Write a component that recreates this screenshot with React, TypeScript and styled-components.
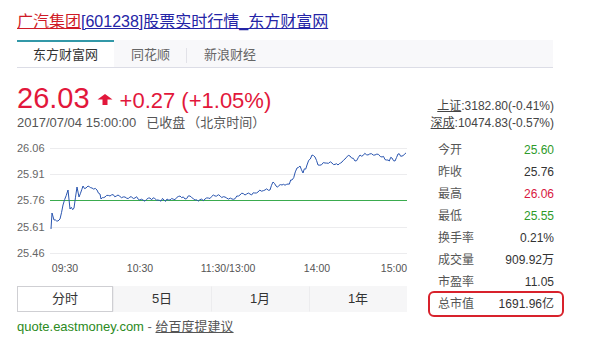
import React from "react";
import styled, { createGlobalStyle } from "styled-components";

const Global = createGlobalStyle`
  html, body { margin: 0; padding: 0; background: #ffffff; }
  body { font-family: "Liberation Sans", "Noto Sans CJK SC", Arial, sans-serif; }
`;

const Page = styled.div`
  width: 593px;
  height: 355px;
  padding: 12px 0 0 17px;
  box-sizing: border-box;
  overflow: hidden;
`;

const Title = styled.div`
  font-size: 16px;
  line-height: 20px;
  white-space: nowrap;
`;

const TitleLink = styled.a<{ $red?: boolean }>`
  color: ${(p) => (p.$red ? "#cf1a26" : "#2424a6")};
  text-decoration: underline;
`;

const TabBar = styled.div`
  margin-top: 8px;
  width: 536px;
  height: 28px;
  box-sizing: border-box;
  background: #f8f8fa;
  border-bottom: 1px solid #dcdde6;
  display: flex;
  align-items: stretch;
`;

const Tab = styled.div<{ $active?: boolean; $sep?: boolean }>`
  position: relative;
  box-sizing: border-box;
  padding: 0 ${(p) => (p.$active ? 16 : 17)}px;
  font-size: 13px;
  line-height: 25px;
  color: ${(p) => (p.$active ? "#333" : "#666")};
  background: ${(p) => (p.$active ? "#ffffff" : "transparent")};
  border-top: 2px solid ${(p) => (p.$active ? "#3298a8" : "transparent")};
  ${(p) =>
    p.$sep
      ? `&::after { content: ""; position: absolute; right: 0; top: 6px; height: 15px; width: 1px; background: #e2e2e8; }`
      : ""}
`;

const Main = styled.div`
  display: grid;
  grid-template-columns: 391px 132px;
  column-gap: 22px;
`;

const LeftCol = styled.div`
  padding-top: 13px;
`;

const PriceRow = styled.div`
  display: flex;
  align-items: baseline;
  color: #e2173b;
  line-height: 34px;
  height: 34px;
`;

const Price = styled.span`
  font-size: 29px;
`;

const Arrow = styled.svg`
  width: 16px;
  height: 11px;
  margin: 0 7px 0 7px;
  align-self: center;
  position: relative;
  top: 1px;
`;

const Change = styled.span`
  font-size: 22px;
`;

const DateLine = styled.div`
  font-size: 13px;
  line-height: 16px;
  color: #555;
  white-space: nowrap;
`;

const Gap = styled.span<{ $w: number }>`
  display: inline-block;
  width: ${(p) => p.$w}px;
`;

const ChartSvg = styled.svg`
  display: block;
  width: 391px;
  height: 148px;
`;

const Periods = styled.div`
  margin-top: 7px;
  display: grid;
  grid-template-columns: 96px 98px 98px 98px;
  height: 26px;
`;

const Period = styled.div<{ $active?: boolean }>`
  box-sizing: border-box;
  font-size: 13px;
  line-height: 24px;
  text-align: center;
  color: #333;
  background: ${(p) => (p.$active ? "#ffffff" : "#f6f6f7")};
  border: 1px solid ${(p) => (p.$active ? "#cfcfd3" : "#f6f6f7")};
  border-left-color: ${(p) => (p.$active ? "#cfcfd3" : "#ececee")};
`;

const Footer = styled.div`
  margin-top: 6px;
  font-size: 13px;
  line-height: 18px;
  color: #666;
  white-space: nowrap;
`;

const Green = styled.span`
  color: #2b8a22;
`;

const Under = styled.span`
  text-decoration: underline;
  color: #555;
`;

const RightCol = styled.div`
  padding-top: 30px;
`;

const IndexLine = styled.div`
  font-size: 12px;
  line-height: 17px;
  text-align: right;
  color: #444;
  padding-right: 8px;
  white-space: nowrap;
`;

const IndexName = styled.span`
  text-decoration: underline;
`;

const Stats = styled.div`
  margin-top: 7px;
`;

const StatRow = styled.div<{ $boxed?: boolean }>`
  display: flex;
  justify-content: space-between;
  height: 22px;
  line-height: 22px;
  font-size: 12px;
  padding: 0 8px;
  border-radius: 4px;
  ${(p) => (p.$boxed ? "outline: 2px solid #d8222c; outline-offset: 0px;" : "")}
`;

const StatLabel = styled.span`
  color: #555;
`;

const StatValue = styled.span<{ $c?: string }>`
  color: ${(p) => p.$c || "#333"};
`;

// chart geometry in page coordinates, converted to svg coordinates
const OX = 17;
const OY = 131;

const KEY: [number, number][] = [
  [51, 229], [52, 213], [54, 220], [58, 221], [60, 219], [63, 205], [68, 190],
  [70, 209], [74, 208], [77, 187], [79, 197], [83, 186], [86, 188], [88, 186],
  [92, 188], [97, 190], [100, 194], [101, 199], [105, 197], [110, 196], [118, 195],
  [125, 197], [135, 198], [143, 200], [150, 198], [158, 200], [170, 200], [180, 196],
  [185, 199], [190, 196], [195, 200], [205, 199], [215, 196], [225, 197], [232, 199],
  [240, 195], [250, 194], [258, 192], [265, 190], [270, 190], [273, 182], [276, 186],
  [282, 185], [288, 184], [292, 180], [297, 168], [300, 166], [303, 173], [307, 165],
  [312, 155], [315, 157], [318, 165], [325, 163], [332, 163], [338, 165], [342, 162],
  [345, 159], [350, 156], [355, 161], [360, 155], [368, 155], [375, 155], [382, 157],
  [388, 160], [392, 158], [395, 161], [398, 154], [402, 156], [406, 153],
];

function buildLine(): string {
  const pts: string[] = [];
  for (let i = 0; i < KEY.length - 1; i++) {
    const [x0, y0] = KEY[i];
    const [x1, y1] = KEY[i + 1];
    const steps = Math.max(1, Math.round((x1 - x0) / 1.6));
    for (let s = 0; s < steps; s++) {
      const t = s / steps;
      const x = x0 + (x1 - x0) * t;
      let y = y0 + (y1 - y0) * t;
      if (s > 0) y += Math.sin(x * 2.7) * 1.1 + Math.sin(x * 7.3) * 0.7;
      pts.push(`${(x - OX).toFixed(1)},${(y - OY).toFixed(1)}`);
    }
  }
  const [lx, ly] = KEY[KEY.length - 1];
  pts.push(`${lx - OX},${ly - OY}`);
  return pts.join(" ");
}

const yLabels = [
  { v: "26.06", y: 148 },
  { v: "25.91", y: 174 },
  { v: "25.76", y: 200 },
  { v: "25.61", y: 227 },
  { v: "25.46", y: 253 },
];

const xLabels = [
  { v: "09:30", x: 65 },
  { v: "10:30", x: 140 },
  { v: "11:30/13:00", x: 228 },
  { v: "14:00", x: 317 },
  { v: "15:00", x: 394 },
];

const stats: { label: string; value: string; color?: string; boxed?: boolean }[] = [
  { label: "今开", value: "25.60", color: "#2e9a2a" },
  { label: "昨收", value: "25.76" },
  { label: "最高", value: "26.06", color: "#d8173f" },
  { label: "最低", value: "25.55", color: "#2e9a2a" },
  { label: "换手率", value: "0.21%" },
  { label: "成交量", value: "909.92万" },
  { label: "市盈率", value: "11.05" },
  { label: "总市值", value: "1691.96亿", boxed: true },
];

function Chart() {
  const line = buildLine();
  return (
    <ChartSvg viewBox="0 0 391 148">
      {yLabels.map((l) => (
        <line
          key={"g" + l.v}
          x1={50 - OX}
          x2={407 - OX}
          y1={l.y - OY + 0.5}
          y2={l.y - OY + 0.5}
          stroke="#ececee"
          strokeWidth={1}
        />
      ))}
      {yLabels.map((l) => (
        <text
          key={"t" + l.v}
          x={0}
          y={l.y - OY + 4}
          fontSize={11}
          fill="#666"
          fontFamily="Liberation Sans, Arial, sans-serif"
        >
          {l.v}
        </text>
      ))}
      <line x1={50 - OX} x2={407 - OX} y1={200 - OY + 0.5} y2={200 - OY + 0.5} stroke="#3aab4e" strokeWidth={1.2} />
      <polyline points={line} fill="none" stroke="#2b56b0" strokeWidth={1} strokeLinejoin="round" />
      {xLabels.map((l) => (
        <text
          key={l.v}
          x={l.x - OX}
          y={268 - OY + 4}
          fontSize={10.5}
          fill="#555"
          textAnchor="middle"
          fontFamily="Liberation Sans, Arial, sans-serif"
        >
          {l.v}
        </text>
      ))}
    </ChartSvg>
  );
}

export default function App() {
  return (
    <>
      <Global />
      <Page>
        <Title>
          <TitleLink $red>广汽集团</TitleLink>
          <TitleLink>[601238]股票实时行情_东方财富网</TitleLink>
        </Title>
        <TabBar>
          <Tab $active>东方财富网</Tab>
          <Tab $sep>同花顺</Tab>
          <Tab>新浪财经</Tab>
        </TabBar>
        <Main>
          <LeftCol>
            <PriceRow>
              <Price>26.03</Price>
              <Arrow viewBox="0 0 16 11">
                <path d="M8 0 L15.5 5.5 L10.5 5.5 L10.5 11 L5.5 11 L5.5 5.5 L0.5 5.5 Z" fill="#e2173b" />
              </Arrow>
              <Change>+0.27 (+1.05%)</Change>
            </PriceRow>
            <DateLine>
              2017/07/04 15:00:00<Gap $w={10} />已收盘<Gap $w={2} />（北京时间）
            </DateLine>
            <Chart />
            <Periods>
              <Period $active>分时</Period>
              <Period>5日</Period>
              <Period>1月</Period>
              <Period>1年</Period>
            </Periods>
            <Footer>
              <Green>quote.eastmoney.com</Green>
              {"  - "}
              <Under>给百度提建议</Under>
            </Footer>
          </LeftCol>
          <RightCol>
            <IndexLine>
              <IndexName>上证</IndexName>:3182.80(-0.41%)
            </IndexLine>
            <IndexLine>
              <IndexName>深成</IndexName>:10474.83(-0.57%)
            </IndexLine>
            <Stats>
              {stats.map((s) => (
                <StatRow key={s.label} $boxed={s.boxed}>
                  <StatLabel>{s.label}</StatLabel>
                  <StatValue $c={s.color}>{s.value}</StatValue>
                </StatRow>
              ))}
            </Stats>
          </RightCol>
        </Main>
      </Page>
    </>
  );
}
